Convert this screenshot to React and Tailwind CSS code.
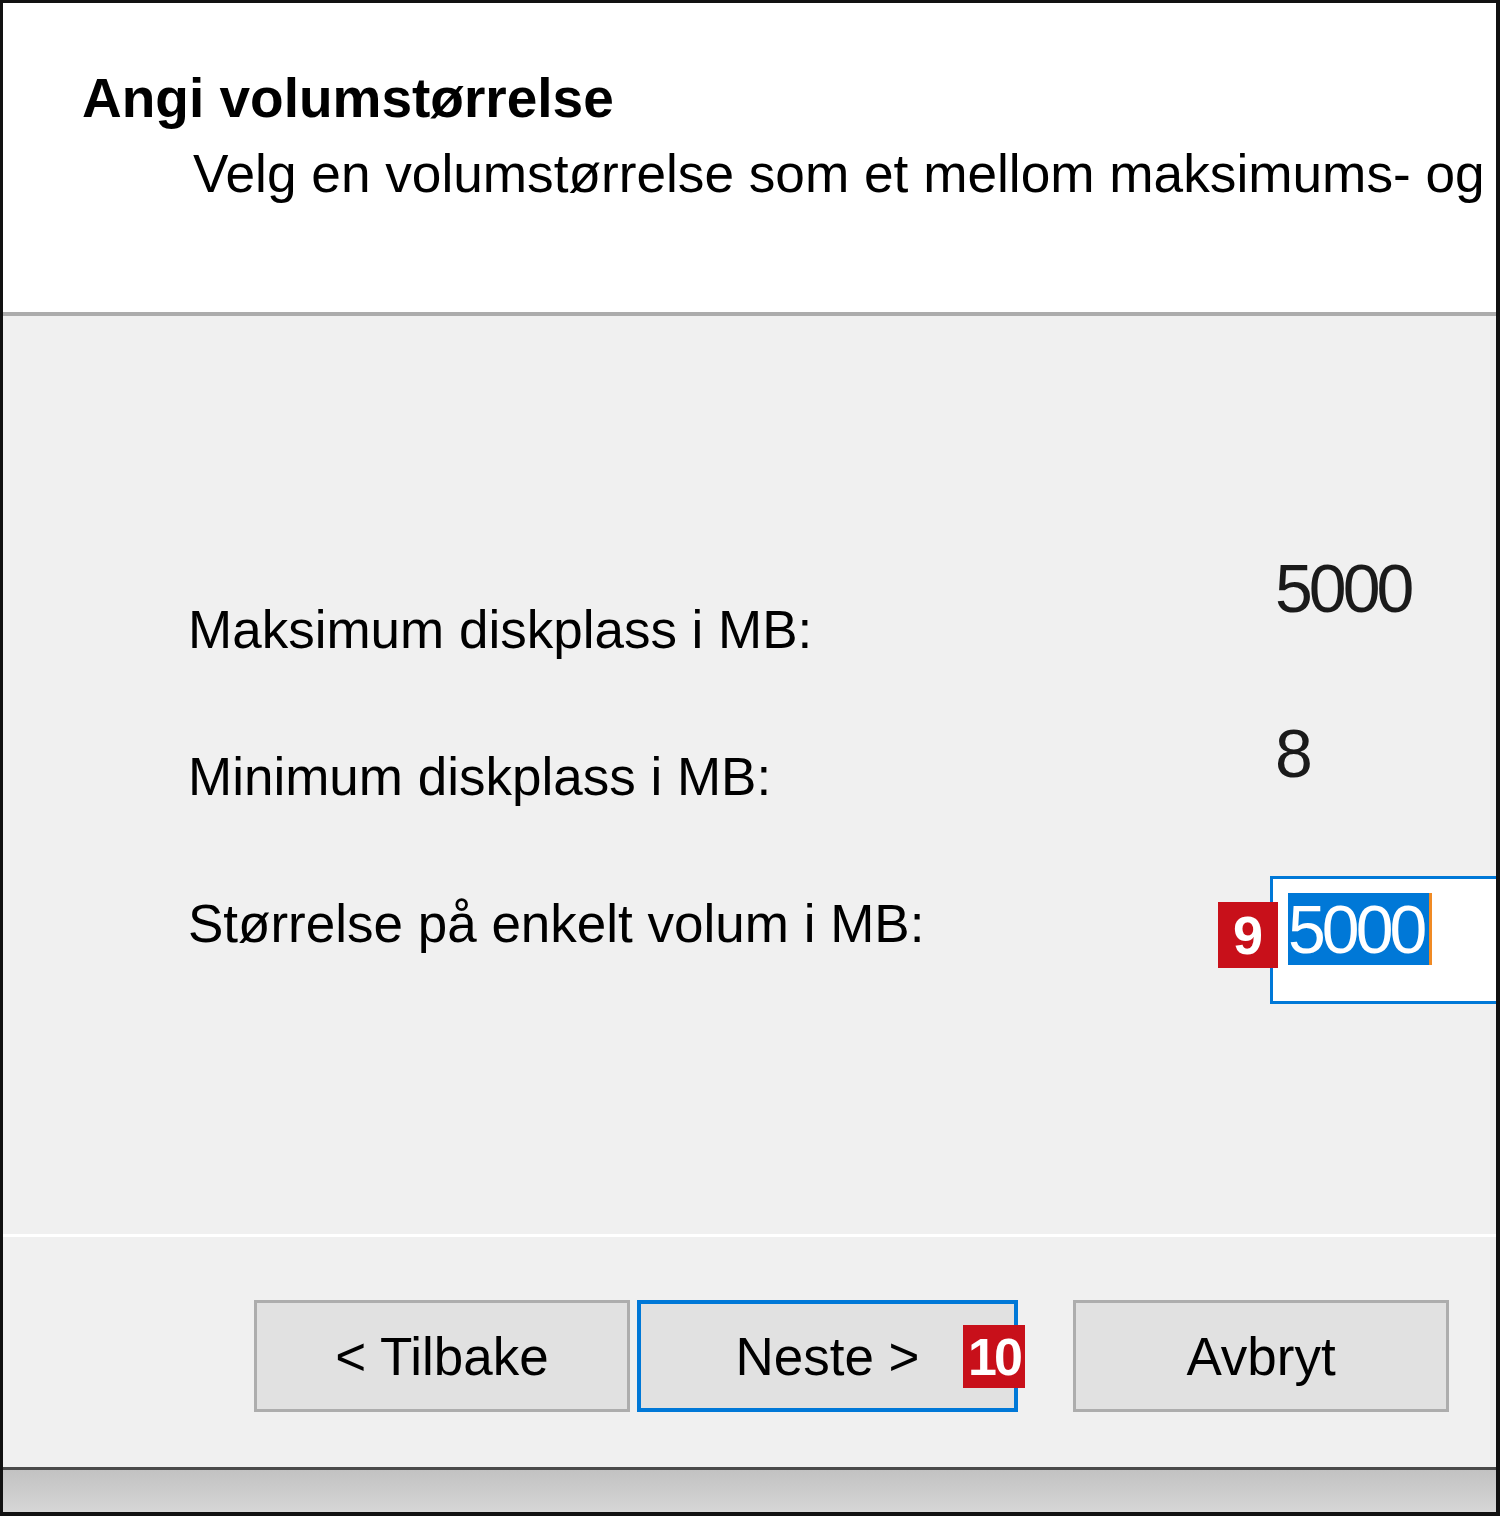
import React from 'react';

const Badge = ({ children, className }) => (
  <span
    className={`absolute z-10 flex items-center justify-center bg-[#c8101a] text-white font-bold leading-none ${className}`}
  >
    {children}
  </span>
);

const DialogButton = ({ children, focused, badge }) => (
  <button
    type="button"
    className={`relative h-[112px] bg-[#e1e1e1] text-[53px] leading-none text-black ${
      focused ? 'w-[381px] border-[4px] border-[#0078d7]' : 'w-[376px] border-[3px] border-[#adadad]'
    }`}
  >
    {children}
    {badge}
  </button>
);

const InfoRow = ({ label, children, valueClass }) => (
  <div className="flex h-[147px] items-start pl-[185px]">
    <div className="mt-[53px] w-[1087px] shrink-0 text-[53px] leading-none text-black">{label}</div>
    <div className={valueClass}>{children}</div>
  </div>
);

export default function App() {
  return (
    <div className="h-[1516px] w-[1500px] overflow-hidden bg-[#111] font-['Liberation_Sans',Arial,sans-serif]">
      <div className="flex h-full flex-col border-b-[4px] border-l-[3px] border-r-[4px] border-t-[3px] border-[#111]">
        {/* header */}
        <div className="h-[309px] shrink-0 whitespace-nowrap bg-white pt-[68px]">
          <h1 className="pl-[79px] text-[55px] font-bold leading-none text-black">Angi volumstørrelse</h1>
          <p className="mt-[21px] pl-[190px] text-[53.2px] leading-none text-black">
            Velg en volumstørrelse som et mellom maksimums- og
          </p>
        </div>
        <div className="h-[4px] shrink-0 bg-[#acacac]" />

        {/* body */}
        <div className="h-[918px] shrink-0 overflow-hidden bg-[#f0f0f0] pt-[234px]">
          <InfoRow label="Maksimum diskplass i MB:" valueClass="mt-[4px] text-[68px] leading-none tracking-[-4px] text-[#1a1a1a]">
            5000
          </InfoRow>
          <InfoRow label="Minimum diskplass i MB:" valueClass="mt-[22px] text-[68px] leading-none tracking-[-4px] text-[#1a1a1a]">
            8
          </InfoRow>
          <InfoRow label="Størrelse på enkelt volum i MB:" valueClass="relative ml-[-5px] mt-[32px]">
            <div className="flex h-[128px] w-[260px] items-start border-[3px] border-[#0078d7] bg-white pl-[15px] pt-[14px]">
              <span className="inline-block h-[72px] bg-[#0078d7] pr-[6px] text-[68px] leading-[72px] tracking-[-4px] text-white">
                5000
              </span>
              <span className="h-[72px] w-[3px] bg-[#f08a24]" />
            </div>
            <Badge className="left-[-52px] top-[26px] h-[66px] w-[60px] text-[54px]">9</Badge>
          </InfoRow>
        </div>
        <div className="h-[3px] shrink-0 bg-white" />

        {/* footer */}
        <div className="flex h-[230px] shrink-0 items-start bg-[#f0f0f0] pl-[251px] pt-[63px]">
          <div className="flex items-center">
            <DialogButton>&lt; Tilbake</DialogButton>
            <div className="ml-[7px]">
              <DialogButton
                focused
                badge={<Badge className="left-[322px] top-[21px] h-[63px] w-[62px] text-[52px] tracking-[-3px]">10</Badge>}
              >
                Neste &gt;
              </DialogButton>
            </div>
            <div className="ml-[55px]">
              <DialogButton>Avbryt</DialogButton>
            </div>
          </div>
        </div>
        <div className="h-[3px] shrink-0 bg-[#4a4a4a]" />
        <div className="flex-1 bg-linear-to-b from-[#c2c2c2] to-[#d6d6d6]" />
      </div>
    </div>
  );
}
